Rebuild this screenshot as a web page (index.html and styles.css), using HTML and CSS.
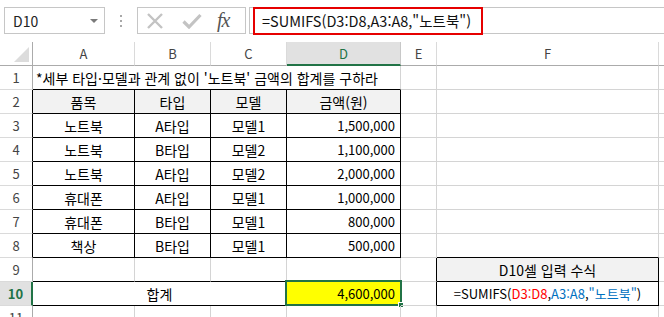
FILE: index.html
```html
<!DOCTYPE html>
<html lang="ko">
<head>
<meta charset="utf-8">
<link rel="stylesheet" href="styles.css">
</head>
<body>
<div class="topbar">
  <div class="namebox"><span>D10</span><span class="caret"></span></div>
  <div class="dots"><i></i><i></i><i></i></div>
  <div class="fxgroup">
    <svg class="ico-x" width="18" height="16" viewBox="0 0 18 16"><path d="M2 1 L16 15 M16 1 L2 15" stroke="#c3c3c3" stroke-width="2.4" fill="none"/></svg>
    <svg class="ico-check" width="20" height="16" viewBox="0 0 20 16"><path d="M1.5 8.5 L7 14 L18.5 2" stroke="#c3c3c3" stroke-width="3.2" fill="none"/></svg>
    <span class="fx">fx</span>
  </div>
  <div class="formula">
    <div class="redbox">=SUMIFS(D3:D8,A3:A8,"노트북")</div>
  </div>
</div>
<div class="sheet">
  <div class="hd corner"><span class="tri"></span></div>
  <div class="hd col">A</div>
  <div class="hd col">B</div>
  <div class="hd col">C</div>
  <div class="hd col sel">D</div>
  <div class="hd col">E</div>
  <div class="hd col">F</div>
  <div class="hd col last"></div>

  <div class="rh">1</div>
  <div class="c span4 bb left">*세부 타입·모델과 관계 없이 '노트북' 금액의 합계를 구하라</div>
  <div class="c"></div><div class="c"></div><div class="c"></div>

  <div class="rh brk">2</div>
  <div class="c ctr bb br th">품목</div>
  <div class="c ctr bb br th">타입</div>
  <div class="c ctr bb br th">모델</div>
  <div class="c ctr bb br th">금액(원)</div>
  <div class="c"></div><div class="c"></div><div class="c"></div>

  <div class="rh brk">3</div>
  <div class="c ctr bb br">노트북</div><div class="c ctr bb br">A타입</div><div class="c ctr bb br">모델1</div><div class="c num bb br">1,500,000</div>
  <div class="c"></div><div class="c"></div><div class="c"></div>

  <div class="rh brk">4</div>
  <div class="c ctr bb br">노트북</div><div class="c ctr bb br">B타입</div><div class="c ctr bb br">모델2</div><div class="c num bb br">1,100,000</div>
  <div class="c"></div><div class="c"></div><div class="c"></div>

  <div class="rh brk">5</div>
  <div class="c ctr bb br">노트북</div><div class="c ctr bb br">A타입</div><div class="c ctr bb br">모델2</div><div class="c num bb br">2,000,000</div>
  <div class="c"></div><div class="c"></div><div class="c"></div>

  <div class="rh brk">6</div>
  <div class="c ctr bb br">휴대폰</div><div class="c ctr bb br">A타입</div><div class="c ctr bb br">모델1</div><div class="c num bb br">1,000,000</div>
  <div class="c"></div><div class="c"></div><div class="c"></div>

  <div class="rh brk">7</div>
  <div class="c ctr bb br">휴대폰</div><div class="c ctr bb br">B타입</div><div class="c ctr bb br">모델1</div><div class="c num bb br">800,000</div>
  <div class="c"></div><div class="c"></div><div class="c"></div>

  <div class="rh brk">8</div>
  <div class="c ctr bb br">책상</div><div class="c ctr bb br">B타입</div><div class="c ctr bb br">모델1</div><div class="c num bb br">500,000</div>
  <div class="c"></div><div class="c bb"></div><div class="c"></div>

  <div class="rh">9</div>
  <div class="c bb"></div><div class="c bb"></div><div class="c bb"></div><div class="c bb"></div>
  <div class="c br"></div>
  <div class="c ctr bb br th">D10셀 입력 수식</div>
  <div class="c"></div>

  <div class="rh selrow">10</div>
  <div class="c span3 ctr bb br">합계</div>
  <div class="c num bb br total">4,600,000<span class="selbox"><span class="handle"></span></span></div>
  <div class="c br"></div>
  <div class="c ctr bb br small"><span>=SUMIFS(<span class="red">D3:D8</span>,<span class="blue">A3:A8</span>,<span class="blue">"노트북"</span>)</span></div>
  <div class="c"></div>

  <div class="rh">11</div>
  <div class="c"></div><div class="c"></div><div class="c"></div><div class="c"></div><div class="c"></div><div class="c"></div><div class="c"></div>
</div>
</body>
</html>
```

FILE: styles.css
```css
* { box-sizing: border-box; }
html, body {
  margin: 0;
  padding: 0;
  background: #ffffff;
  width: 664px;
  height: 317px;
  overflow: hidden;
  font-family: "Noto Sans CJK KR", "Noto Sans", sans-serif;
  color: #000;
}

.topbar {
  height: 42px;
  display: flex;
  align-items: flex-start;
  padding-top: 7px;
}
.namebox {
  margin-left: 4px;
  width: 101px;
  height: 27px;
  border: 1px solid #c6c6c6;
  display: flex;
  align-items: center;
  justify-content: space-between;
  padding: 0 6px 0 8px;
  font-size: 14px;
  color: #222;
}
.caret {
  width: 0; height: 0;
  border-left: 4px solid transparent;
  border-right: 4px solid transparent;
  border-top: 4px solid #7a7a7a;
}
.dots {
  width: 32px;
  height: 27px;
  display: flex;
  flex-direction: column;
  align-items: center;
  justify-content: center;
  gap: 3px;
}
.dots i {
  display: block;
  width: 2px; height: 2px;
  background: #a8a8a8;
}
.fxgroup {
  width: 109px;
  height: 27px;
  border: 1px solid #c6c6c6;
  display: flex;
  align-items: center;
  padding-left: 8px;
}
.ico-x { margin-right: 18px; }
.ico-check { margin-right: 15px; }
.fx {
  font-family: "Liberation Serif", "DejaVu Serif", serif;
  font-style: italic;
  font-size: 20px;
  color: #555;
  line-height: 1;
  margin-top: -2px;
  letter-spacing: -1px;
}
.formula {
  margin-left: 3px;
  flex: 1;
  height: 27px;
  border: 1px solid #c6c6c6;
  border-right: none;
  position: relative;
}
.redbox {
  position: absolute;
  left: 3px;
  top: -1px;
  width: 230px;
  height: 28px;
  border: 2px solid #e60000;
  font-size: 14.5px;
  line-height: 23px;
  padding-left: 7px;
  color: #111;
  white-space: nowrap;
}

.sheet {
  display: grid;
  grid-template-columns: 33px 102px 76px 76px 114px 36px 222px 1fr;
  grid-auto-rows: 24px;
  font-size: 14px;
}
.hd {
  display: flex;
  align-items: center;
  justify-content: center;
  border-bottom: 1px solid #ababab;
  color: #444;
  font-size: 13px;
  background: #fff;
}
.col { border-right: 1px solid #dadada; }
.col.last { border-right: none; }
.col.sel {
  background: #e1e1e1;
  border-bottom: 2px solid #217346;
  color: #217346;
  border-right: 1px solid #c8c8c8;
}
.corner {
  border-right: 1px solid #ababab;
  position: relative;
}
.tri {
  position: absolute;
  right: 3px;
  bottom: 3px;
  width: 15px;
  height: 15px;
  background: #dcdcdc;
  clip-path: polygon(100% 0, 100% 100%, 0 100%);
}
.rh {
  display: flex;
  align-items: center;
  justify-content: center;
  border-right: 1px solid #ababab;
  border-bottom: 1px solid #dadada;
  color: #444;
  font-size: 13px;
}
.rh.brk { border-right: 1px solid #000; }
.rh.selrow {
  background: #e1e1e1;
  color: #217346;
  font-weight: bold;
  border-right: 2px solid #217346;
}
.c {
  border-right: 1px solid #d4d4d4;
  border-bottom: 1px solid #d4d4d4;
  display: flex;
  align-items: center;
  white-space: nowrap;
  padding: 0 4px;
  position: relative;
}
.c.bb { border-bottom-color: #000; }
.c.br { border-right-color: #000; }
.ctr { justify-content: center; }
.num { justify-content: flex-end; padding-right: 5px; font-size: 13px; }
.small { font-size: 13px; }
.left { padding-left: 3px; }
.th { background: #f2f2f2; }
.span4 { grid-column: span 4; }
.span3 { grid-column: span 3; }
.total { background: #ffff00; }
.selbox {
  position: absolute;
  left: -2px;
  top: -2px;
  right: -2px;
  bottom: -1px;
  border: 2px solid #217346;
}
.handle {
  position: absolute;
  right: -4px;
  bottom: -4px;
  width: 6px;
  height: 6px;
  background: #217346;
  border: 1px solid #fff;
}
.red { color: #ff0000; }
.blue { color: #0070c0; }
```
